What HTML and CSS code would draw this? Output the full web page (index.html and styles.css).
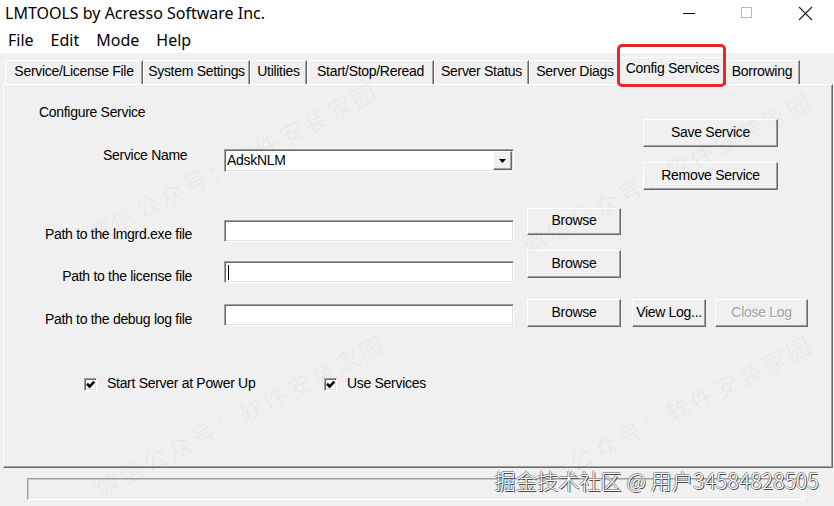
FILE: index.html
```html
<!DOCTYPE html>
<html>
<head>
<meta charset="utf-8">
<link rel="stylesheet" href="styles.css">
</head>
<body>
<div class="window">
  <div class="titlebar">
    <span class="title">LMTOOLS by Acresso Software Inc.</span>
    <div class="controls">
      <span class="ctl"><svg width="12" height="12"><line x1="0" y1="6.5" x2="12" y2="6.5" stroke="#111" stroke-width="1"/></svg></span>
      <span class="ctl"><svg width="12" height="12"><rect x="0.5" y="0.5" width="10" height="10" fill="none" stroke="#b8b8b8"/></svg></span>
      <span class="ctl"><svg width="15" height="15"><path d="M1 1L14 14M14 1L1 14" stroke="#222" stroke-width="1.1" fill="none"/></svg></span>
    </div>
  </div>
  <div class="menubar">
    <span>File</span><span>Edit</span><span>Mode</span><span>Help</span>
  </div>
  <div class="tabs">
    <div class="tab t1">Service/License File</div>
    <div class="tab t2">System Settings</div>
    <div class="tab t3">Utilities</div>
    <div class="tab t4">Start/Stop/Reread</div>
    <div class="tab t5">Server Status</div>
    <div class="tab t6">Server Diags</div>
    <div class="tab t7 active">Config Services</div>
    <div class="tab t8">Borrowing</div>
  </div>
  <div class="panel">
    <div class="cfg">
      <div class="cfg-left">
        <div class="heading">Configure Service</div>
        <div class="svc-row">
          <span class="svc-label">Service Name</span>
          <div class="combo">
            <span class="combo-text">AdskNLM</span>
            <span class="combo-btn"><svg width="7" height="4"><path d="M0 0H7L3.5 4Z" fill="#000"/></svg></span>
          </div>
        </div>
      </div>
      <div class="cfg-right">
        <button class="btn btn-wide">Save Service</button>
        <button class="btn btn-wide">Remove Service</button>
      </div>
    </div>
    <div class="prow r1">
      <span class="plabel">Path to the lmgrd.exe file</span>
      <div class="pinput"></div>
      <button class="btn pbrowse">Browse</button>
    </div>
    <div class="prow r2">
      <span class="plabel">Path to the license file</span>
      <div class="pinput"><span class="caret"></span></div>
      <button class="btn pbrowse">Browse</button>
    </div>
    <div class="prow r3">
      <span class="plabel">Path to the debug log file</span>
      <div class="pinput"></div>
      <button class="btn pbrowse">Browse</button>
      <button class="btn pview">View Log...</button>
      <button class="btn pclose" disabled>Close Log</button>
    </div>
    <div class="chkrow">
      <label class="chk chk-first"><span class="box"><svg width="9" height="9"><polyline points="1,3.6 3.6,6.6 8.2,1.6" fill="none" stroke="#000" stroke-width="2.6"/></svg></span><span class="chk-text">Start Server at Power Up</span></label>
      <label class="chk"><span class="box"><svg width="9" height="9"><polyline points="1,3.6 3.6,6.6 8.2,1.6" fill="none" stroke="#000" stroke-width="2.6"/></svg></span><span class="chk-text">Use Services</span></label>
    </div>
  </div>
  <div class="status">
    <div class="statusbox"></div>
  </div>

  <div class="wm w1">微信公众号：软件安装家园</div>
  <div class="wm w2">微信公众号：软件安装家园</div>
  <div class="wm w3">微信公众号：软件安装家园</div>
  <div class="wm w4">微信公众号：软件安装家园</div>
  <div class="highlight"></div>
  <div class="juejin">掘金技术社区 @ 用户34584828505</div>
</div>
</body>
</html>
```
FILE: styles.css
```css
html, body {
  margin: 0;
  padding: 0;
}
body {
  width: 834px;
  height: 506px;
  overflow: hidden;
  background: #f0f0f0;
  font-family: "Liberation Sans", Arial, sans-serif;
  color: #000;
}
.window {
  position: relative;
  width: 834px;
  height: 506px;
}
.titlebar {
  height: 26px;
  background: #fff;
  display: flex;
  align-items: center;
}
.title {
  flex: 1;
  padding-left: 5px;
  font-family: "Noto Sans", sans-serif;
  font-size: 16px;
  line-height: 22px;
}
.controls {
  display: flex;
  height: 26px;
}
.ctl {
  width: 58px;
  display: flex;
  align-items: center;
  justify-content: center;
}
.menubar {
  height: 27px;
  background: #fff;
  display: flex;
  align-items: center;
  gap: 17px;
  padding-left: 8px;
  font-family: "Noto Sans", sans-serif;
  font-size: 16px;
  line-height: 22px;
}
.tabs {
  height: 31px;
  display: flex;
  align-items: flex-end;
  padding-left: 5px;
  font-size: 14px;
  letter-spacing: -0.3px;
}
.tab {
  box-sizing: border-box;
  height: 24px;
  line-height: 20px;
  border-top: 1px solid #fff;
  border-left: 1px solid #fff;
  border-right: 1px solid #696969;
  box-shadow: inset -1px 0 #a0a0a0;
  background: #f0f0f0;
  text-align: center;
  white-space: nowrap;
}
.t1 { width: 138px; }
.t2 { width: 107px; }
.t3 { width: 57px; }
.t4 { width: 127px; }
.t5 { width: 95px; }
.t6 { width: 92px; }
.t7 { width: 107px; }
.t8 { width: 76px; }
.tab.active {
  position: relative;
  z-index: 1;
  height: 28px;
  line-height: 20px;
  margin: 0 -2px -1px -2px;
}
.panel {
  box-sizing: border-box;
  margin-left: 3px;
  width: 830px;
  height: 384px;
  border-top: 1px solid #fff;
  border-left: 1px solid #fff;
  border-right: 1px solid #696969;
  border-bottom: 1px solid #696969;
  box-shadow: inset -1px -1px #a0a0a0;
  font-size: 14px;
  letter-spacing: -0.3px;
}
.cfg {
  display: flex;
}
.cfg-left {
  width: 639px;
  padding-top: 19px;
}
.heading {
  margin-left: 35px;
  line-height: 16px;
}
.svc-row {
  display: flex;
  margin-top: 29px;
}
.svc-label {
  box-sizing: border-box;
  width: 220px;
  padding-left: 99px;
  line-height: 16px;
  margin-top: -2px;
  white-space: nowrap;
}
.combo {
  box-sizing: border-box;
  width: 290px;
  height: 23px;
  background: #fff;
  border-top: 1px solid #a0a0a0;
  border-left: 1px solid #a0a0a0;
  border-right: 1px solid #fff;
  border-bottom: 1px solid #fff;
  box-shadow: inset 1px 1px #696969, inset -1px -1px #e3e3e3;
  display: flex;
  align-items: center;
  padding: 1px;
}
.combo-text {
  padding-left: 1px;
  line-height: 16px;
  margin-top: -1px;
}
.combo-btn {
  margin-left: auto;
  box-sizing: border-box;
  width: 19px;
  height: 19px;
  background: #f0f0f0;
  border-top: 1px solid #fff;
  border-left: 1px solid #fff;
  border-right: 1px solid #696969;
  border-bottom: 1px solid #696969;
  box-shadow: inset -1px -1px #a0a0a0;
  display: flex;
  align-items: center;
  justify-content: center;
}
.cfg-right {
  padding-top: 34px;
  display: flex;
  flex-direction: column;
  gap: 15px;
}
.btn {
  box-sizing: border-box;
  margin: 0;
  padding: 0 0 3px 0;
  height: 28px;
  background: #f0f0f0;
  border-top: 1px solid #fff;
  border-left: 1px solid #fff;
  border-right: 1px solid #696969;
  border-bottom: 1px solid #696969;
  box-shadow: inset -1px -1px #a0a0a0;
  font-family: "Liberation Sans", Arial, sans-serif;
  font-size: 14px;
  letter-spacing: -0.3px;
  color: #000;
  white-space: nowrap;
  text-align: center;
}
.btn:disabled {
  color: #a0a0a0;
  text-shadow: 1px 1px 0 #fff;
}
.btn-wide {
  width: 135px;
}
.prow {
  display: grid;
  grid-template-columns: 220px 290px 13px 94px 11px 74px 9px 93px;
  align-items: start;
}
.plabel {
  grid-column: 1;
  text-align: right;
  padding-right: 32px;
  line-height: 16px;
  white-space: nowrap;
}
.pinput {
  grid-column: 2;
  box-sizing: border-box;
  height: 22px;
  background: #fff;
  border-top: 1px solid #a0a0a0;
  border-left: 1px solid #a0a0a0;
  border-right: 1px solid #fff;
  border-bottom: 1px solid #fff;
  box-shadow: inset 1px 1px #696969, inset -1px -1px #e3e3e3;
  display: flex;
  align-items: center;
  padding-left: 3px;
}
.caret {
  width: 1px;
  height: 15px;
  background: #000;
}
.pbrowse { grid-column: 4; }
.pview { grid-column: 6; }
.pclose { grid-column: 8; }

.r1 { margin-top: 18px; }
.r1 .plabel { margin-top: 18px; }
.r1 .pinput { margin-top: 12px; }
.r1 .pbrowse { height: 27px; }

.r2 { margin-top: 8px; }
.r2 .plabel { margin-top: 18px; }
.r2 .pinput { margin-top: 11px; }

.r3 { margin-top: 15px; }
.r3 .plabel { margin-top: 12px; }
.r3 .pinput { margin-top: 5px; }

.chkrow {
  display: flex;
  margin-top: 48px;
  padding-left: 80px;
  line-height: 16px;
}
.chk {
  display: flex;
  align-items: center;
}
.chk-first {
  width: 240px;
}
.box {
  box-sizing: border-box;
  width: 13px;
  height: 13px;
  margin-top: 2px;
  background: #fff;
  border-top: 1px solid #a0a0a0;
  border-left: 1px solid #a0a0a0;
  border-right: 1px solid #fff;
  border-bottom: 1px solid #fff;
  box-shadow: inset 1px 1px #696969, inset -1px -1px #e3e3e3;
  display: flex;
  align-items: center;
  justify-content: center;
}
.chk-text {
  margin-left: 10px;
  white-space: nowrap;
}
.status {
  box-sizing: border-box;
  height: 39px;
  padding-top: 10px;
  padding-left: 27px;
}
.statusbox {
  box-sizing: border-box;
  width: 777px;
  height: 22px;
  border-top: 1px solid #a0a0a0;
  border-left: 1px solid #a0a0a0;
  border-right: 1px solid #fff;
  border-bottom: 1px solid #fff;
  box-shadow: inset 1px 1px #c8c8c8;
}
.highlight {
  position: absolute;
  left: 617px;
  top: 44px;
  width: 109px;
  height: 43px;
  box-sizing: border-box;
  border: 3px solid #e8262b;
  border-radius: 5px;
  z-index: 3;
}
.juejin {
  position: absolute;
  right: 15px;
  top: 466px;
  line-height: 28px;
  font-family: "Noto Sans CJK SC", "Noto Sans", sans-serif;
  font-size: 21px;
  font-weight: 300;
  letter-spacing: 0.2px;
  color: #fbfbfb;
  text-shadow: 1px 1px 0 #4a4a4a, -1px 0 0 #8a8a8a, 0 -1px 0 #9a9a9a;
  white-space: nowrap;
  z-index: 4;
}
.wm {
  position: absolute;
  width: 330px;
  line-height: 30px;
  text-align: center;
  font-family: "Noto Sans CJK SC", sans-serif;
  font-size: 24px;
  letter-spacing: 3px;
  color: rgba(0, 0, 0, 0.045);
  transform: rotate(-27deg);
  white-space: nowrap;
  pointer-events: none;
  z-index: 2;
}
.w1 { left: 67px; top: 147px; }
.w2 { left: 75px; top: 400px; }
.w3 { left: 502px; top: 400px; }
.w4 { left: 502px; top: 157px; }
```
